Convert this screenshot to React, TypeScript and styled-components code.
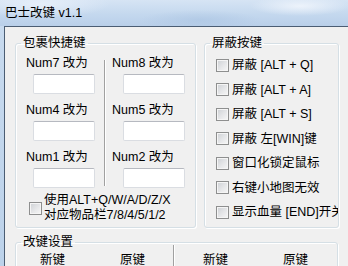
import styled, { createGlobalStyle } from 'styled-components';

const GlobalStyle = createGlobalStyle`
  html, body {
    margin: 0;
    padding: 0;
  }
  body {
    font-family: "Liberation Sans", "Noto Sans CJK SC", sans-serif;
    font-size: 12.5px;
    color: #000;
    background: #c2d6ec;
  }
`;

const numSlots = [
  ['Num7 改为', 'Num8 改为'],
  ['Num4 改为', 'Num5 改为'],
  ['Num1 改为', 'Num2 改为'],
];

const blockOptions = [
  '屏蔽 [ALT + Q]',
  '屏蔽 [ALT + A]',
  '屏蔽 [ALT + S]',
  '屏蔽 左[WIN]键',
  '窗口化锁定鼠标',
  '右键小地图无效',
  '显示血量 [END]开关',
];

const App = () => {
  return (
    <>
      <GlobalStyle />
      <Window>
        <TitleBar>巴士改键 v1.1</TitleBar>
        <Frame>
          <Client>
            <TopRow>
              <Group $width={181}>
                <Legend>包裹快捷键</Legend>
                <SlotGrid>
                  <SlotColumn $pad={10} $inputPad={7}>
                    {numSlots.map((row) => (
                      <Slot key={row[0]}>
                        <span>{row[0]}</span>
                        <KeyInput />
                      </Slot>
                    ))}
                  </SlotColumn>
                  <VLine />
                  <SlotColumn $pad={7} $inputPad={11}>
                    {numSlots.map((row) => (
                      <Slot key={row[1]}>
                        <span>{row[1]}</span>
                        <KeyInput />
                      </Slot>
                    ))}
                  </SlotColumn>
                </SlotGrid>
                <AltRow>
                  <CheckBox />
                  <AltText>
                    使用ALT+Q/W/A/D/Z/X
                    <br />
                    对应物品栏7/8/4/5/1/2
                  </AltText>
                </AltRow>
              </Group>
              <Group $width={135}>
                <Legend>屏蔽按键</Legend>
                <OptionList>
                  {blockOptions.map((o) => (
                    <OptionRow key={o}>
                      <CheckBox />
                      <span>{o}</span>
                    </OptionRow>
                  ))}
                </OptionList>
              </Group>
            </TopRow>
            <BottomGroup>
              <Legend>改键设置</Legend>
              <MapGrid>
                <MapHeader $pad={24}>
                  <HeadCell>新键</HeadCell>
                  <HeadCell>原键</HeadCell>
                </MapHeader>
                <VLine />
                <MapHeader $pad={29}>
                  <HeadCell>新键</HeadCell>
                  <HeadCell>原键</HeadCell>
                </MapHeader>
              </MapGrid>
            </BottomGroup>
          </Client>
        </Frame>
      </Window>
    </>
  );
};

export default App;

const Window = styled.div`
  width: 348px;
  height: 266px;
  overflow: hidden;
  display: flex;
  flex-direction: column;
  background: linear-gradient(180deg, #c9dbef 0%, #bcd2ea 100%);
`;

const TitleBar = styled.div`
  height: 26px;
  flex: none;
  box-sizing: border-box;
  padding: 5px 0 0 5px;
  line-height: 16px;
  color: #000;
  background:
    radial-gradient(ellipse 50px 10px at 300px 6px, rgba(240, 245, 252, 0.9), rgba(240, 245, 252, 0)),
    radial-gradient(ellipse 70px 14px at 40px 4px, rgba(232, 240, 250, 0.9), rgba(232, 240, 250, 0)),
    radial-gradient(ellipse 60px 10px at 200px 20px, rgba(170, 196, 226, 0.6), rgba(170, 196, 226, 0)),
    linear-gradient(180deg, #d6e4f4 0%, #c4d8ee 55%, #b9cfe9 100%);
`;

const Frame = styled.div`
  flex: 1;
  display: flex;
  padding-left: 4px;
  min-height: 0;
`;

const Client = styled.div`
  flex: 1;
  background: #f0f0f0;
  border-top: 1px solid #4b5d73;
  border-left: 1px solid #4b5d73;
  padding: 8px 0 0 10px;
  overflow: hidden;
`;

const TopRow = styled.div`
  display: flex;
  gap: 8px;
`;

const Group = styled.fieldset<{ $width: number }>`
  box-sizing: border-box;
  width: ${(p) => p.$width}px;
  height: 193px;
  min-width: 0;
  margin: 0;
  padding: 0;
  border: 1px solid #d5dfe5;
  border-radius: 3px;
  box-shadow: inset 1px 1px 0 #fff, 1px 1px 0 #fff;
`;

const Legend = styled.legend`
  margin-left: 5px;
  padding: 0 2px;
  line-height: 16px;
`;

const SlotGrid = styled.div`
  display: grid;
  grid-template-columns: 88px 1px 1fr;
  padding-top: 4px;
`;

const SlotColumn = styled.div<{ $pad: number; $inputPad: number }>`
  display: flex;
  flex-direction: column;
  gap: 8px;
  padding-left: ${(p) => p.$pad}px;
  & input {
    margin-left: ${(p) => p.$inputPad}px;
  }
`;

const Slot = styled.div`
  display: flex;
  flex-direction: column;
  gap: 3px;
  line-height: 16px;
  white-space: nowrap;
`;

const KeyInput = styled.input`
  box-sizing: border-box;
  width: 62px;
  height: 20px;
  margin: 0;
  padding: 0 3px;
  background: #fff;
  border: 1px solid #dadde2;
  border-top-color: #b6b9c0;
  border-radius: 2px;
  outline: none;
`;

const VLine = styled.div`
  width: 1px;
  background: #a0a0a0;
  box-shadow: 1px 0 0 #fff;
  margin: 5px 0 2px;
`;

const AltRow = styled.div`
  display: flex;
  align-items: center;
  gap: 2px;
  margin-top: 5px;
  padding-left: 13px;
`;

const AltText = styled.div`
  line-height: 15px;
  white-space: nowrap;
`;

const CheckBox = styled.span`
  flex: none;
  box-sizing: border-box;
  width: 13px;
  height: 13px;
  border: 1px solid #8e8f8f;
  background: linear-gradient(135deg, #cdd0d4 0%, #e6e7e9 55%, #f7f7f7 100%);
  box-shadow: inset 0 0 0 1px #f5f5f5;
`;

const OptionList = styled.div`
  display: flex;
  flex-direction: column;
  gap: 8.5px;
  padding: 6px 0 0 11px;
  overflow: hidden;
`;

const OptionRow = styled.div`
  display: flex;
  align-items: center;
  gap: 3px;
  line-height: 16px;
  white-space: nowrap;
`;

const BottomGroup = styled.fieldset`
  box-sizing: border-box;
  width: 323px;
  height: 80px;
  min-width: 0;
  margin: 6px 0 0;
  padding: 0;
  border: 1px solid #d5dfe5;
  border-radius: 3px;
  box-shadow: inset 1px 1px 0 #fff, 1px 1px 0 #fff;
`;

const MapGrid = styled.div`
  display: grid;
  grid-template-columns: 157px 1px 1fr;
  margin-top: -5px;
  height: 60px;
  & > div:nth-child(2) {
    margin: 0;
  }
`;

const MapHeader = styled.div<{ $pad: number }>`
  display: flex;
  min-width: 0;
  padding: 7px 0 0 ${(p) => p.$pad}px;
  line-height: 16px;
  white-space: nowrap;
`;

const HeadCell = styled.span`
  flex: none;
  width: 80px;
`;
